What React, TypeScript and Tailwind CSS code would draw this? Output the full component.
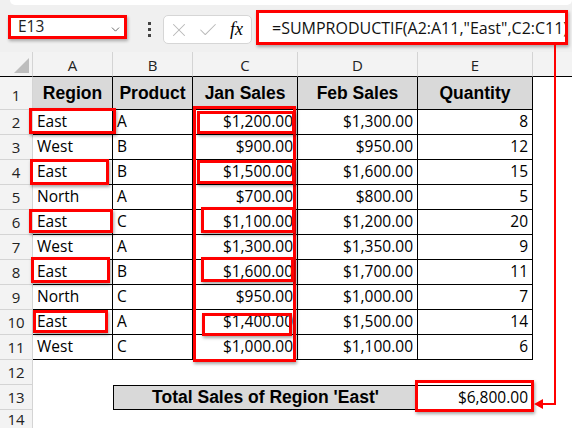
import React from "react";
import { ChevronDown, X, Check } from "lucide-react";

const rows = [
    ["East", "A", "$1,200.00", "$1,300.00", "8"],
    ["West", "B", "$900.00", "$950.00", "12"],
    ["East", "B", "$1,500.00", "$1,600.00", "15"],
    ["North", "A", "$700.00", "$800.00", "5"],
    ["East", "C", "$1,100.00", "$1,200.00", "20"],
    ["West", "A", "$1,300.00", "$1,350.00", "9"],
    ["East", "B", "$1,600.00", "$1,700.00", "11"],
    ["North", "C", "$950.00", "$1,000.00", "7"],
    ["East", "A", "$1,400.00", "$1,500.00", "14"],
    ["West", "C", "$1,000.00", "$1,100.00", "6"],
];

// red highlight boxes drawn over the sheet
const marks = [
    "left-[29px] top-[108px] w-[87px] h-[26px]",
    "left-[30px] top-[159px] w-[79px] h-[26px]",
    "left-[29px] top-[209px] w-[84px] h-[24px]",
    "left-[31px] top-[257px] w-[79px] h-[26px]",
    "left-[33px] top-[310px] w-[75px] h-[23px]",
    "left-[193px] top-[106px] w-[103px] h-[256px]",
    "left-[197px] top-[111px] w-[98px] h-[23px]",
    "left-[197px] top-[160px] w-[98px] h-[24px]",
    "left-[201px] top-[207px] w-[94px] h-[26px]",
    "left-[201px] top-[257px] w-[93px] h-[25px]",
    "left-[202px] top-[313px] w-[90px] h-[23px]",
    "left-[415px] top-[380px] w-[119px] h-[32px]",
];

const rowHead = "flex items-center justify-center border-r border-b border-[#d4d4d4] bg-[#f3f3f3] text-[15px] text-[#222]";
const cell = "flex items-center border-r border-b border-black bg-white px-[4px] text-[15.5px] text-black";
const head = "flex items-center justify-center border-r border-b border-black bg-[#d9d9d9] font-['Liberation_Sans',sans-serif] text-[17.5px] font-bold text-black";

function ColHead({ label, last }: { label: string; last?: boolean }) {
    return (
        <div className={`flex items-center justify-center border-b border-black bg-[#f3f3f3] pt-[3px] text-[15px] text-[#222] ${last ? "" : "border-r border-r-[#d4d4d4]"}`}>
            {label}
        </div>
    );
}

export default function App() {
    return (
        <div className="relative w-[572px] h-[428px] overflow-hidden bg-white font-['Open_Sans',sans-serif]">
            {/* Toolbar */}
            <div className="h-[52px] bg-[#f0f0f0]">
                <div className="ml-[10px] h-[5px] rounded-b-[8px] bg-white" />
                <div className="flex items-start pl-[8px]">
                    <div className="mt-[10px] flex h-[24px] w-[119px] items-center justify-between border-[3px] border-[#ff0000] bg-white pl-[7px] pr-[2px] shadow-[1px_2px_3px_rgba(0,0,0,0.3)]">
                        <span className="text-[15.5px] leading-none text-[#222]">E13</span>
                        <ChevronDown size={13} strokeWidth={1.6} className="mt-[4px] text-[#555]" />
                    </div>
                    <div className="mt-[17px] ml-[21px] flex flex-col gap-[3px]">
                        <div className="h-[3px] w-[3px] bg-[#444]" />
                        <div className="h-[3px] w-[3px] bg-[#444]" />
                        <div className="h-[3px] w-[3px] bg-[#444]" />
                    </div>
                    <div className="mt-[10px] ml-[12px] flex h-[29px] w-[89px] items-center rounded-[5px] border border-[#d6d6d6] bg-white pl-[4px]">
                        <X size={22} strokeWidth={1.1} className="text-[#b8b8b8]" />
                        <Check size={22} strokeWidth={1.1} className="ml-[7px] text-[#b8b8b8]" />
                        <span className="ml-[11px] font-['Liberation_Serif',serif] text-[18px] italic text-black">fx</span>
                    </div>
                    <div className="mt-[5px] ml-[4px] flex h-[35px] w-[312px] items-center overflow-hidden whitespace-nowrap border-[3px] border-[#ff0000] bg-white pl-[13px] shadow-[1px_2px_3px_rgba(0,0,0,0.3)]">
                        <span className="text-[16px] text-[#111]">=SUMPRODUCTIF(A2:A11,"East",C2:C11)</span>
                    </div>
                </div>
            </div>

            {/* Sheet */}
            <div className="grid grid-cols-[33px_80px_80px_105px_120px_115px_1fr] grid-rows-[25px_33px_repeat(13,25px)]">
                <div className="flex items-end justify-end border-r border-b border-r-[#d4d4d4] border-b-black bg-[#f3f3f3] p-[3px]">
                    <svg width="15" height="15" viewBox="0 0 15 15">
                        <polygon points="15,0 15,15 0,15" fill="#bdbdbd" />
                    </svg>
                </div>
                <ColHead label="A" />
                <ColHead label="B" />
                <ColHead label="C" />
                <ColHead label="D" />
                <ColHead label="E" />
                <ColHead label="" last />

                {/* Row 1 headers */}
                <div className={`${rowHead} items-end pb-[3px]`}>1</div>
                <div className={head}>Region</div>
                <div className={head}>Product</div>
                <div className={head}>Jan Sales</div>
                <div className={head}>Feb Sales</div>
                <div className={head}>Quantity</div>
                <div className="bg-white" />

                {rows.map((r, i) => (
                    <React.Fragment key={i}>
                        <div className={rowHead}>{i + 2}</div>
                        <div className={cell}>{r[0]}</div>
                        <div className={cell}>{r[1]}</div>
                        <div className={`${cell} justify-end`}>{r[2]}</div>
                        <div className={`${cell} justify-end`}>{r[3]}</div>
                        <div className={`${cell} justify-end`}>{r[4]}</div>
                        <div className="bg-white" />
                    </React.Fragment>
                ))}

                <div className={rowHead}>12</div>
                <div className="col-span-6 bg-white" />

                <div className={rowHead}>13</div>
                <div className="bg-white" />
                <div className="col-span-3 flex items-center justify-center border border-black bg-[#d9d9d9] font-['Liberation_Sans',sans-serif] text-[17.5px] font-bold text-black">
                    Total Sales of Region 'East'
                </div>
                <div className="flex items-center justify-end border-y border-r border-black bg-white px-[4px] text-[15.5px] text-black">$6,800.00</div>
                <div className="bg-white" />

                <div className={`${rowHead} items-start pt-[2px] leading-[15px]`}>14</div>
                <div className="col-span-6 bg-white" />
            </div>

            {/* Highlights */}
            {marks.map((m, i) => (
                <div key={i} className={`absolute ${m} border-[3px] border-[#ff0000] shadow-[1px_2px_3px_rgba(0,0,0,0.35)]`} />
            ))}

            {/* Connector from formula bar to E13 */}
            <svg className="absolute left-0 top-0" width="572" height="428" viewBox="0 0 572 428">
                <polyline points="555,45 555,404 541,404" fill="none" stroke="#ff0000" strokeWidth="2" />
                <polygon points="534,404 543,399 543,409" fill="#ff0000" />
            </svg>
        </div>
    );
}
